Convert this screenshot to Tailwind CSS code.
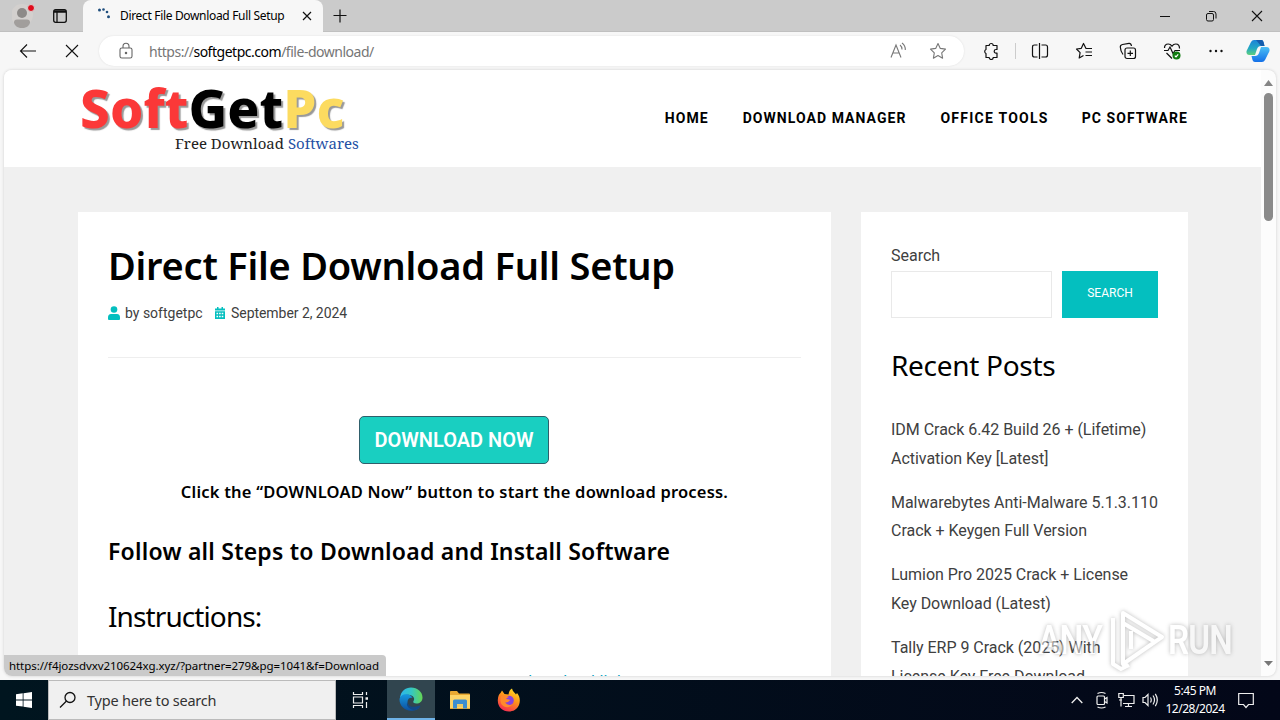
<!DOCTYPE html>
<html lang="en">
<head>
  <meta charset="UTF-8">
  <title>Direct File Download Full Setup</title>
  <script src="https://cdn.jsdelivr.net/npm/@tailwindcss/browser@4"></script>
</head>
<body class="w-[1280px] h-[720px] overflow-hidden">
<div class="relative flex flex-col w-[1280px] h-[720px] overflow-hidden bg-[#f7f7f7] font-['Noto_Sans','Open_Sans',sans-serif]">

  <!-- TAB BAR -->
  <div class="flex h-8 bg-[#cbcbcb] border-b border-[#c0c0c0]">
    <div class="flex items-center w-[83px] h-8 pl-3">
      <svg class="w-6 h-7" viewBox="0 0 24 28">
        <circle cx="10" cy="13" r="11" fill="#d3d0ce"/>
        <circle cx="10" cy="11" r="5" fill="#8d8a88"/>
        <path d="M2 20.500q0-3 3-3h10q3 0 3 3c-1 4-4 5.500-8 5.500s-7-1.500-8-5.500z" fill="#a19e9c"/>
        <circle cx="19" cy="6" r="3.500" fill="#e00b1c" stroke="#d9d4d2"/>
      </svg>
      <svg class="w-4 h-4 ml-4" viewBox="0 0 16 16" fill="none" stroke="#111" stroke-width="1.300">
        <rect x="1.700" y="1.700" width="12.600" height="12.600" rx="2"/>
        <path d="M2 3.500h12" stroke-width="2.500"/><path d="M5 4v10"/>
      </svg>
    </div>
    <div class="flex items-center w-[240px] h-8 rounded-t-lg bg-[#f7f7f7] pl-[14px]">
      <svg class="w-4 h-4" viewBox="0 0 16 16" fill="#1f4e7d">
        <circle cx="2.500" cy="2" r="1.500"/><circle cx="6.500" cy="1.500" r="1.300"/><circle cx="10" cy="4" r="1.300"/><circle cx="11.500" cy="8.700" r="1.500"/>
      </svg>
      <span class="w-[180px] ml-[7px] text-[12px] tracking-[-0.33px] whitespace-nowrap text-black">Direct File Download Full Setup</span>
      <svg class="w-3 h-3 ml-[1px]" viewBox="0 0 12 12" stroke="#111" stroke-width="1.200"><path d="M2 2l8 8M10 2l-8 8"/></svg>
    </div>
    <svg class="w-4 h-4 mt-2 ml-[9px]" viewBox="0 0 16 16" stroke="#111" stroke-width="1.200"><path d="M8 1.500v13M1.500 7.500h13"/></svg>
    <div class="flex ml-auto">
      <div class="flex items-center justify-center w-[46px]"><svg class="w-3 h-3" viewBox="0 0 12 12" stroke="#111"><path d="M1 6.500h10"/></svg></div>
      <div class="flex items-center justify-center w-[46px]"><svg class="w-3 h-3" viewBox="0 0 12 12" fill="none" stroke="#111"><rect x="1.500" y="3.500" width="7" height="7.500" rx="1.500"/><path d="M4 1.500h4.500q2.500 0 2.500 2.500v4.500"/></svg></div>
      <div class="flex items-center justify-center w-[46px]"><svg class="w-3 h-3" viewBox="0 0 12 12" stroke="#111" stroke-width="1.100"><path d="M1 1l10 10M11 1L1 11"/></svg></div>
    </div>
  </div>

  <!-- TOOLBAR -->
  <div class="flex items-center h-[38px] pl-[6px]">
    <div class="flex justify-center w-11"><svg class="w-5 h-5" viewBox="0 0 20 20" fill="none" stroke="#111" stroke-width="1.100"><path d="M9 3.500L2.500 10L9 16.500M2.500 10H18"/></svg></div>
    <div class="flex justify-center w-11"><svg class="w-4 h-4" viewBox="0 0 16 16" stroke="#111" stroke-width="1.100"><path d="M2 2l12 12M14 2L2 14"/></svg></div>
    <div class="flex items-center w-[865px] h-[30px] ml-[5px] pl-[18px] rounded-full bg-white shadow-[0_0_2px_#ddd]">
      <svg class="w-[18px] h-[18px]" viewBox="0 0 18 18" fill="none" stroke="#666" stroke-width="1.100"><rect x="3" y="6" width="12" height="10" rx="1.800"/><path d="M6 6V4.500a3 3.200 0 0 1 6 0V6"/><circle cx="9" cy="11" r=".7" fill="#666"/></svg>
      <span class="w-[734px] ml-[14px] text-[14px] tracking-[-0.48px] text-[#767676]">https://<span class="text-black">softgetpc.com</span>/file-download/</span>
      <svg class="w-5 h-5 ml-[5px]" viewBox="0 0 20 20" fill="none" stroke="#777" stroke-width="1.100"><path d="M3 16.500L8 4L13 16.500M4.800 12h6.400M12 4q2 1.500 2 4.500M14 2q3.500 2.500 3.300 7"/></svg>
      <svg class="w-[18px] h-[18px] ml-[21px]" viewBox="0 0 18 18" fill="none" stroke="#777" stroke-width="1.100" stroke-linejoin="round"><path d="M9 1.500l2.300 4.900 5.200.7-3.800 3.700.9 5.400L9 13.600l-4.600 2.600.9-5.400-3.800-3.700 5.200-.7z"/></svg>
    </div>
    <div class="flex justify-center w-11 ml-[5px]"><svg class="w-[18px] h-[18px]" viewBox="0 0 18 18" fill="none" stroke="#111" stroke-width="1.200"><path d="M4 3.500h3.200a2 2 0 0 1 4 0H15v4h-1a1.800 1.800 0 0 0 0 3.600h1V15.500h-3.800a2 2 0 0 1-4 0H4v-4a2.200 2.200 0 0 1 0-4z" stroke-linejoin="round"/></svg></div>
    <div class="w-px h-4 mx-0.5 bg-[#ccc]"></div>
    <div class="flex justify-center w-11"><svg class="w-[18px] h-[18px]" viewBox="0 0 18 18" fill="none" stroke="#111" stroke-width="1.200"><path d="M6.500 3H3.500Q1.500 3 1.500 5v8q0 2 2 2h3M10.500 3h4q2 0 2 2v8q0 2-2 2h-4M8.500 1v16"/></svg></div>
    <div class="flex justify-center w-11"><svg class="w-[18px] h-[18px]" viewBox="0 0 18 18" fill="none" stroke="#111" stroke-width="1.200" stroke-linejoin="round"><path d="M17 6.500h-6L8.500 1.500 6.300 6.300 1.500 7l3.600 3.700-.9 5.300 4.300-2.400M10.500 10H17M10.500 13.500H17"/></svg></div>
    <div class="flex justify-center w-11"><svg class="w-[18px] h-[18px]" viewBox="0 0 18 18" fill="none" stroke="#111" stroke-width="1.200"><rect x="6" y="6" width="10.500" height="10.500" rx="2"/><path d="M11.300 8.500v5.500M8.500 11.300H14M4 12.500Q1.500 9 1.300 5 1.200 3 3.500 2.500L10 1.300q2-.2 2.500 2.700"/></svg></div>
    <div class="flex justify-center w-11"><svg class="w-[18px] h-[18px]" viewBox="0 0 18 18" fill="none" stroke="#111" stroke-width="1.200"><path d="M1.500 6Q1.500 2 5.200 2 7.500 2 9 4.200 10.500 2 12.800 2 16.500 2 16.500 6.500M1 8.500h4L7 5l3 6.500 2-3h5M3.500 11L9 16.500"/><circle cx="13.500" cy="13.500" r="4" fill="#107c10" stroke="none"/><path d="M11.800 13.700l1.200 1.200 2.200-2.500" stroke="#fff"/></svg></div>
    <div class="flex justify-center w-11"><svg class="w-4 h-4" viewBox="0 0 16 16" fill="#111"><circle cx="2.500" cy="8" r="1.200"/><circle cx="8" cy="8" r="1.200"/><circle cx="13.500" cy="8" r="1.200"/></svg></div>
    <svg class="w-6 h-6 ml-2" viewBox="0 0 24 24">
      <defs>
        <linearGradient id="cp1" x1="0" y1="0" x2="0" y2="1"><stop offset="0" stop-color="#1b83d8"/><stop offset=".55" stop-color="#22a7c4"/><stop offset="1" stop-color="#5ed07c"/></linearGradient>
        <linearGradient id="cp2" x1="0" y1="0" x2="0" y2="1"><stop offset="0" stop-color="#4cc0f5"/><stop offset="1" stop-color="#1470e8"/></linearGradient>
      </defs>
      <path d="M5 3Q6 1 8 1h7.500q1.500 0 2 2l1 4h-3.500q-3 0-4 3l-2 6H3.500Q0 16 .5 12z" fill="url(#cp1)"/>
      <path d="M19 21q-1 2-3 2H9q-2 0-2.500-2L5.500 17H9q3 0 4-3l2-6h5.500q3.500 0 3 4z" fill="url(#cp2)"/>
      <path d="M10 1h5.500q1.500 0 2 2l1 4H15z" fill="#145cad"/>
    </svg>
  </div>

  <!-- WEB PAGE -->
  <div class="relative flex w-[1272px] h-[606px] ml-1 overflow-hidden rounded-lg bg-[#fcfcfc] shadow-[0_0_3px_#ccc]">
    <div class="w-[1257px] h-full bg-[#f0f0f0]">
      <header class="flex justify-between h-[97px] pl-[75px] pr-[73px] bg-white">
        <div class="w-[300px] pt-[8px] whitespace-nowrap">
          <p class="h-[55px] pl-px leading-[60px] text-[53px] font-extrabold tracking-[0.1px] font-['Noto_Sans',sans-serif] [text-shadow:2px_2px_1px_#999]"><span class="text-[#fb3838]">Soft</span><span class="text-black">Get</span><span class="text-[#fcdb60]">Pc</span></p>
          <p class="pl-[96px] leading-5 text-[15px] text-[#222] font-['Noto_Serif','DejaVu_Serif','Liberation_Serif',serif]">Free Download <span class="text-[#2450a4]">Softwares</span></p>
        </div>
        <nav class="flex gap-[33px] pt-[38px] text-[14px] leading-5 font-bold tracking-[1.050px] text-black font-['Roboto',sans-serif]">
          <a class="-mr-px pr-[2px]">HOME</a><a class="pr-px">DOWNLOAD MANAGER</a><a class="tracking-[1.250px]">OFFICE TOOLS</a><a>PC SOFTWARE</a>
        </nav>
      </header>
      <div class="flex gap-[30px] pt-[45px] pl-[74px]">
        <main class="w-[753px] h-[480px] px-[30px] bg-white font-['Roboto',sans-serif]">
          <h1 class="pt-[27px] text-[38px] leading-[52px] font-semibold tracking-[-0.230px] whitespace-nowrap text-black font-['Noto_Sans',sans-serif]">Direct File Download Full Setup</h1>
          <div class="flex items-center h-5 mt-3 text-[14px] whitespace-nowrap text-[#404040]">
            <svg class="w-3 h-[14px]" viewBox="0 0 12 14" fill="#04bfbf"><circle cx="6" cy="3.500" r="3.300"/><path d="M0 11.500Q0 8 3 8h6q3 0 3 3.500V13q0 1-1 1H1q-1 0-1-1z"/></svg>
            <span class="w-[86px] ml-[5px]">by softgetpc</span>
            <svg class="w-[10px] h-3 ml-[4px]" viewBox="0 0 10 12" fill="#04bfbf"><path d="M0 1.500h2V0h1.500v1.500h3V0H8v1.500h2v2H0zM0 4.300h10V12H0z"/><path d="M1.500 6.500h7M1.500 9.500h7" stroke="#fff" stroke-width="1.400" stroke-dasharray="1.600 1"/></svg>
            <span class="ml-[6px] tracking-[-0.050px]">September 2, 2024</span>
          </div>
          <div class="mt-[34px] h-px bg-[#eee]"></div>
          <div class="flex justify-center mt-[58px] pr-px">
            <a class="flex items-center justify-center w-[190px] h-12 rounded-[5px] border border-[#2f5f6b] bg-[#19cfc1] text-[20px] font-semibold text-white">DOWNLOAD NOW</a>
          </div>
          <p class="mt-[16px] text-[16.500px] leading-6 text-center tracking-[0.200px] whitespace-nowrap font-semibold text-black font-['Noto_Sans',sans-serif]">Click the “DOWNLOAD Now” button to start the download process.</p>
          <h3 class="mt-[30px] text-[23px] leading-[34px] tracking-[0.220px] whitespace-nowrap font-semibold text-black font-['Noto_Sans',sans-serif]">Follow all Steps to Download and Install Software</h3>
          <h2 class="mt-[29px] text-[28px] leading-[38px] tracking-[-0.900px] text-black font-['Noto_Sans',sans-serif]">Instructions:</h2>
          <p class="mt-[35px] pl-[415px] text-[16px] leading-6 tracking-[0.300px] text-[#04a0bf]">download link</p>
        </main>
        <aside class="w-[327px] h-[480px] px-[30px] pt-[32px] bg-white text-[16px] text-[#404040] font-['Roboto',sans-serif]">
          <p class="leading-6">Search</p>
          <div class="flex gap-[10px] mt-[3px]">
            <div class="w-[161px] h-[47px] border border-[#e9e9e9]"></div>
            <div class="flex items-center justify-center w-24 h-[47px] pb-1 bg-[#04bfbf] text-[12px] text-white">SEARCH</div>
          </div>
          <h2 class="mt-[28px] text-[28px] leading-[38px] tracking-[-0.300px] whitespace-nowrap text-black font-['Noto_Sans',sans-serif]">Recent Posts</h2>
          <ul class="flex flex-col gap-[15px] mt-8 leading-[28.800px] tracking-[-0.030px] whitespace-nowrap">
            <li>IDM Crack 6.42 Build 26 + (Lifetime)<br>Activation Key [Latest]</li>
            <li>Malwarebytes Anti-Malware 5.1.3.110<br>Crack + Keygen Full Version</li>
            <li>Lumion Pro 2025 Crack + License<br>Key Download (Latest)</li>
            <li>Tally ERP 9 Crack (2025) With<br>License Key Free Download</li>
          </ul>
        </aside>
      </div>
    </div>
    <!-- scrollbar -->
    <div class="flex flex-col items-center w-[15px] pt-[10px]">
      <svg class="w-[9px] h-[6px]" viewBox="0 0 9 6" fill="#858585"><path d="M0 6L4.500 0L9 6z"/></svg>
      <div class="w-[9px] h-32 mt-[7px] rounded-full bg-[#8a8a8a]"></div>
      <svg class="w-[9px] h-[5px] mt-auto mb-[10px]" viewBox="0 0 9 5" fill="#777"><path d="M0 0h9L4.500 5z"/></svg>
    </div>
    <!-- link status -->
    <div class="absolute left-0 bottom-0 w-[382px] h-[21px] pl-[5px] rounded-tr bg-[#cacaca] text-[11.500px] leading-[21px] tracking-[-0.070px] whitespace-nowrap text-black">https://f4jozsdvxv210624xg.xyz/?partner=279&amp;pg=1041&amp;f=Download</div>
  </div>

  <!-- TASKBAR -->
  <div class="flex items-center h-10 mt-1 bg-gradient-to-r from-[#00151f] to-[#030718] text-white">
    <div class="flex justify-center w-12"><svg class="w-4 h-4" viewBox="0 0 16 16" fill="#fff"><path d="M0 2.200L6.700 1.300v6.200H0zM7.500 1.200L16 0v7.500H7.500zM0 8.400h6.700v6.200L0 13.700zM7.500 8.400H16V16l-8.500-1.200z"/></svg></div>
    <div class="flex items-center w-72 h-10 pl-[10px] border border-[#bbb] bg-[#f0f0f0]">
      <svg class="w-[18px] h-[18px]" viewBox="0 0 18 18" fill="none" stroke="#111" stroke-width="1.300"><circle cx="11" cy="6.500" r="5"/><path d="M7.500 10L1 16.500"/></svg>
      <span class="ml-[10px] pt-0.5 text-[14.500px] tracking-[-0.220px] whitespace-nowrap text-[#333]">Type here to search</span>
    </div>
    <div class="flex justify-center w-[51px] pr-1"><svg class="w-[18px] h-[18px]" viewBox="0 0 18 18" fill="none" stroke="#eee" stroke-width="1.200"><path d="M2.500 1v2.500h9V1M2.500 17v-2.500h9V17M2.500 6h9v6h-9zM15.500 1v3M15.500 11v6"/><path d="M14.500 7.500h2.500" stroke-width="2.500"/></svg></div>
    <div class="flex items-center justify-center w-12 h-10 border-b-2 border-[#6fb3e8] bg-[#31454f]">
      <svg class="w-6 h-6" viewBox="0 0 24 24">
        <defs>
          <linearGradient id="e1" x1="0" y1="0" x2="1" y2="0"><stop offset="0" stop-color="#2db6ec"/><stop offset=".5" stop-color="#34c6c5"/><stop offset="1" stop-color="#65d653"/></linearGradient>
          <linearGradient id="e2" x1="0" y1="0" x2="0" y2="1"><stop offset="0" stop-color="#1698e0"/><stop offset="1" stop-color="#0d4f9e"/></linearGradient>
        </defs>
        <path d="M1 11C1.500 4.500 6.500.5 12 .5 18.500.5 23.500 5 23.500 10.500c0 4-3 6-6 6-2.500 0-4-1-3-2.500 1.500-2 .5-5-3.500-6C7 7 3 8 1 11z" fill="url(#e1)"/>
        <path d="M.5 12.500C1 8.500 5 6.500 9 7.500c2.500.6 4 2 4.500 3.500-2-1-5 .5-5 4 0 4 4 7 10.500 5.500l1.500 0C18 23 15 24 12 23.700 5.500 23.500.5 18.500.5 12.500z" fill="url(#e2)"/>
        <path d="M8.500 15c0 4 4.500 6.500 12 3.500q1.500 0 .5 1.500-2 2.500-5.500 3.200C9.500 22.500 6.500 18 8.500 15z" fill="#124887"/>
      </svg>
    </div>
    <div class="flex justify-center w-[49px]"><svg class="w-[22px] h-5" viewBox="0 0 22 20"><path d="M1 1.500Q1 1 2 1h6l2 2.500h10q1 0 1 1V19H1z" fill="#e9a932"/><path d="M1 5h20v13H1z" fill="#fdd467"/><path d="M4 18.500V11q0-1.500 1.500-1.500h11Q18 9.500 18 11v7.500h-4V14H8v4.500z" fill="#3d8ed0"/><path d="M8 14h6v3H8z" fill="#eecb68"/></svg></div>
    <div class="flex justify-center w-[49px]"><svg class="w-6 h-6" viewBox="0 0 24 24">
      <defs><linearGradient id="f1" x1=".8" y1="0" x2=".3" y2="1"><stop offset="0" stop-color="#ffe226"/><stop offset=".45" stop-color="#ff9419"/><stop offset="1" stop-color="#f52a53"/></linearGradient></defs>
      <path d="M5 2.500L7.500 6l4 .5Q12 2 15 .5c.5 3 3 4 4 6l1-1.500c3 3.500 3.500 8 2 12-2 4.500-6 6.500-10 6.500C5.500 23.500.5 19 .8 12 1 8.500 2 6 3.500 5z" fill="url(#f1)"/>
      <circle cx="12" cy="12.500" r="4.800" fill="#8643dd"/>
      <path d="M4 8q4-2 8 1-2 .5-3 2 2 0 4 1-2 3-5 2.500 3 4 8 1.500-4 5-9 2.500T4 8z" fill="#ff892c"/>
    </svg></div>
    <div class="flex items-center ml-auto">
      <svg class="w-3 h-3 mr-[13px]" viewBox="0 0 12 12" fill="none" stroke="#eee" stroke-width="1.300"><path d="M.7 9L6 3.500 11.300 9"/></svg>
      <svg class="w-3 h-[18px] mr-[10px]" viewBox="0 0 12 18" fill="none" stroke="#eee" stroke-width="1.200"><rect x="1" y="5" width="7.500" height="8.500" rx="1"/><path d="M8.500 8l2.500-1.500v5.500L8.500 10.500M1.500 2.500q4-2 8 0M1.500 16q4 2 8 0"/></svg>
      <svg class="w-[17px] h-4 mr-[7px]" viewBox="0 0 17 16" fill="none" stroke="#eee" stroke-width="1.200"><path d="M6 3.500h10v8H5M10.500 11.500v3M7 14.500h7"/><path d="M.8 1.500h4.500v4H.8zM3 5.500v9M1 8h3"/></svg>
      <svg class="w-[17px] h-4 mr-[6px]" viewBox="0 0 17 16" fill="none" stroke="#eee" stroke-width="1.200"><path d="M1 5.500h2L6 2.500v11L3 10.500H1zM8.500 5.500q1.500 2.500 0 5M11 3.500q3 4.500 0 9M13.300 1.800q4 6.200 0 12.400"/></svg>
      <div class="w-[60px] text-center text-[12px] leading-[18px] tracking-[-0.460px] whitespace-nowrap">5:45 PM<br>12/28/2024</div>
      <svg class="w-4 h-[17px] ml-[13px] mr-[26px]" viewBox="0 0 16 17" fill="none" stroke="#eee" stroke-width="1.200"><path d="M.7 1.500h14.600v11H10.500L8 15.500l-2.500-3H.7z"/></svg>
    </div>
  </div>

  <!-- WATERMARK -->
  <div class="absolute left-[1038px] top-[608px] flex items-center w-[198px] h-[66px] opacity-50 drop-shadow-[0_0_2px_#777]">
    <span class="w-[68px] text-[41px] tracking-[-1px] font-semibold text-white font-['Roboto',sans-serif]"><span class="inline-block origin-left scale-x-[0.82]">ANY</span></span>
    <svg class="w-[58px] h-[64px] ml-[2px]" viewBox="0 0 58 64" fill="none" stroke="#fff" stroke-width="4" stroke-linejoin="round"><path d="M15 4L54 28 15 55zM15 14L47 33M23 40V22M5 9v46l8 5 8-4"/></svg>
    <span class="w-[66px] ml-[2px] text-[41px] tracking-[-1px] font-semibold text-white font-['Roboto',sans-serif]"><span class="inline-block origin-left scale-x-[0.81]">RUN</span></span>
  </div>
</div>
</body>
</html>
